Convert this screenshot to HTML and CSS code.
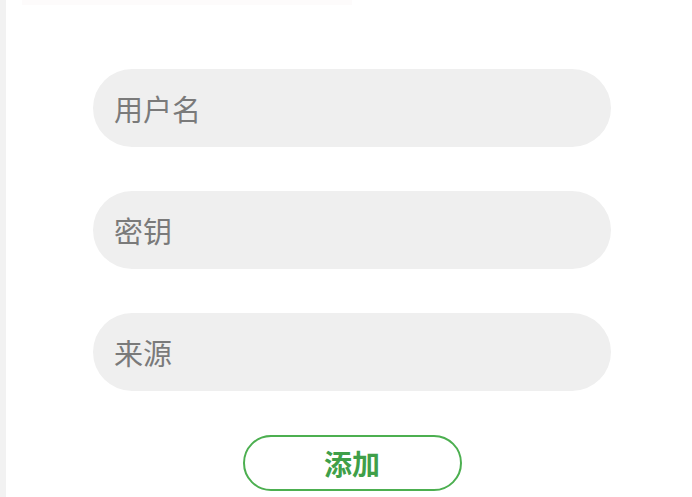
FILE: index.html
```html
<!DOCTYPE html>
<html lang="zh-CN">
<head>
<meta charset="utf-8">
<title>添加</title>
<link rel="stylesheet" href="styles.css">
</head>
<body>
<div class="page">
  <div class="stripe"></div>
  <main class="content">
    <div class="topline"></div>
    <form class="form">
      <input class="field" type="text" placeholder="用户名">
      <input class="field" type="text" placeholder="密钥">
      <input class="field" type="text" placeholder="来源">
      <button class="add" type="button">添加</button>
    </form>
  </main>
</div>
</body>
</html>
```

FILE: styles.css
```css
html, body {
  margin: 0;
  padding: 0;
  background: #ffffff;
  font-family: "Noto Sans CJK SC", "Noto Sans", sans-serif;
}
.page {
  display: flex;
  width: 692px;
  height: 497px;
  overflow: hidden;
}
.stripe {
  width: 6px;
  flex: none;
  background: #f2f2f2;
}
.content {
  flex: 1;
  display: flex;
  flex-direction: column;
}
.topline {
  margin-left: 16px;
  width: 330px;
  height: 5px;
  background: #fdfbfb;
}
.form {
  margin: 64px 0 0 87px;
  width: 518px;
  display: flex;
  flex-direction: column;
  align-items: center;
  gap: 44px;
}
.field {
  box-sizing: border-box;
  width: 518px;
  height: 78px;
  border: none;
  outline: none;
  border-radius: 39px;
  background: #efefef;
  padding: 0 0 0 21px;
  font-family: inherit;
  font-size: 29px;
  color: #7a7a7a;
}
.field::placeholder {
  color: #7a7a7a;
}
.add {
  box-sizing: border-box;
  width: 219px;
  height: 56px;
  border: 2px solid #4caf50;
  border-radius: 28px;
  background: #ffffff;
  color: #3f9f49;
  font-family: inherit;
  font-size: 28px;
  font-weight: 700;
  padding: 0;
}
```
